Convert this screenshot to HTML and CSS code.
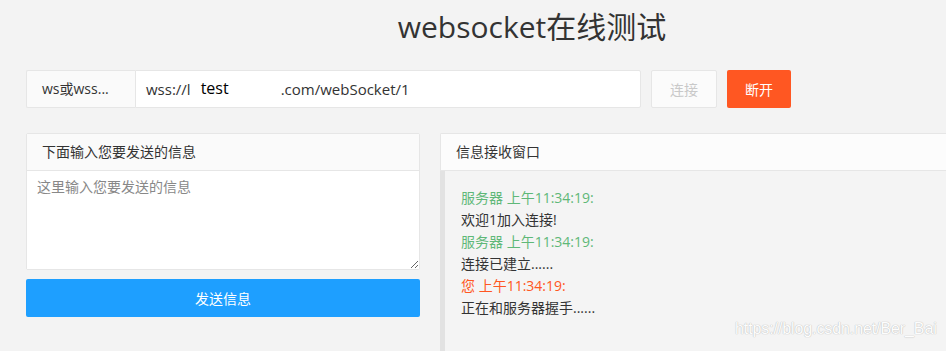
FILE: index.html
```html
<!DOCTYPE html>
<html lang="zh-CN">
<head>
<meta charset="utf-8">
<title>websocket在线测试</title>
<link rel="stylesheet" href="styles.css">
</head>
<body>
<div class="page">
  <h1 class="title">websocket在线测试</h1>
  <div class="url-row">
    <div class="url-group">
      <label class="url-label">ws或wss...</label>
      <div class="url-input"><span>wss://l</span><span class="redact">test</span><span>.com/webSocket/1</span></div>
    </div>
    <button class="btn btn-disabled">连接</button>
    <button class="btn btn-danger">断开</button>
  </div>
  <div class="panels">
    <div class="left-col">
      <div class="card">
        <div class="card-head">下面输入您要发送的信息</div>
        <textarea class="msg-input" placeholder="这里输入您要发送的信息"></textarea>
      </div>
      <button class="btn btn-send">发送信息</button>
    </div>
    <div class="card card-recv">
      <div class="card-head">信息接收窗口</div>
      <div class="recv-body">
        <div class="from-server">服务器 上午11:34:19:</div>
        <div class="msg">欢迎1加入连接!</div>
        <div class="from-server">服务器 上午11:34:19:</div>
        <div class="msg">连接已建立......</div>
        <div class="from-me">您 上午11:34:19:</div>
        <div class="msg">正在和服务器握手......</div>
      </div>
    </div>
  </div>
</div>
<div class="watermark">https://blog.csdn.net/Ber_Bai</div>
</body>
</html>
```
FILE: styles.css
```css
html, body {
  margin: 0;
  padding: 0;
  height: 100%;
  overflow: hidden;
  background: #f3f3f3;
}
body {
  font-family: "Open Sans", "Noto Sans CJK SC", sans-serif;
  font-size: 14px;
  color: #333;
}
.page {
  height: 100%;
  padding-left: 26px;
  box-sizing: border-box;
  display: flex;
  flex-direction: column;
}
.title {
  margin: 0;
  height: 54px;
  line-height: 54px;
  text-align: center;
  font-weight: normal;
  font-size: 30px;
  color: #333;
  padding-left: 92px;
}
.url-row {
  margin-top: 16px;
  display: flex;
  align-items: stretch;
  height: 38px;
}
.url-group {
  display: flex;
  width: 615px;
  box-sizing: border-box;
}
.url-label {
  width: 109px;
  box-sizing: border-box;
  padding: 0 0 0 15px;
  background: #fafafa;
  border: 1px solid #e6e6e6;
  border-right: none;
  border-radius: 2px 0 0 2px;
  line-height: 36px;
  color: #333;
}
.url-input {
  flex: 1;
  background: #fff;
  border: 1px solid #e6e6e6;
  border-radius: 0 2px 2px 0;
  padding-left: 10px;
  line-height: 36px;
  color: #333;
  font-size: 15px;
  white-space: nowrap;
}
.redact {
  display: inline-block;
  width: 90px;
  padding-left: 10px;
  box-sizing: border-box;
  color: #000;
  font-size: 16px;
  line-height: 34px;
  vertical-align: top;
}
.btn {
  border: 1px solid transparent;
  border-radius: 2px;
  font-family: inherit;
  font-size: 14px;
  cursor: pointer;
  padding: 0;
}
.btn-disabled {
  margin-left: 10px;
  width: 66px;
  background: #fbfbfb;
  border-color: #e6e6e6;
  color: #c9c9c9;
}
.btn-danger {
  margin-left: 10px;
  width: 64px;
  background: #ff5722;
  color: #fff;
}
.panels {
  flex: 1;
  min-height: 0;
  margin-top: 25px;
  display: flex;
  gap: 20px;
  align-items: flex-start;
}
.left-col {
  width: 394px;
  flex: none;
  display: flex;
  flex-direction: column;
  gap: 9px;
}
.card {
  border: 1px solid #e6e6e6;
  border-radius: 2px;
  background: #fff;
  display: flex;
  flex-direction: column;
}
.card-head {
  height: 36px;
  line-height: 36px;
  padding-left: 15px;
  background: #fafafa;
  border-bottom: 1px solid #e6e6e6;
  color: #333;
}
.msg-input {
  display: block;
  height: 98px;
  border: none;
  margin: 0;
  padding: 6px 10px;
  box-sizing: border-box;
  font-family: inherit;
  font-size: 14px;
  line-height: 20px;
  color: #333;
  outline: none;
  resize: vertical;
}
.msg-input::placeholder {
  color: #888;
}
.btn-send {
  height: 38px;
  background: #1e9fff;
  color: #fff;
  width: 100%;
}
.card-recv {
  flex: 1;
  align-self: stretch;
  background: #f4f4f4;
  border-right: none;
  border-bottom: none;
  border-radius: 2px 0 0 0;
}
.card-recv .card-head {
  background: #fcfcfc;
}
.recv-body {
  flex: 1;
  margin-left: -1px;
  border-left: 5px solid #e2e2e2;
  padding: 16px 15px 0 16px;
  line-height: 22px;
}
.from-server {
  color: #5fb878;
}
.from-me {
  color: #ff5722;
}
.msg {
  color: #333;
}
.watermark {
  position: absolute;
  left: 735px;
  top: 320px;
  font-family: "Liberation Sans", Arial, sans-serif;
  font-size: 16px;
  color: #fdfdfd;
  text-shadow: 0 0 1px #b8b8b8, 0 0 1px #c8c8c8;
  letter-spacing: -0.1px;
}
```
